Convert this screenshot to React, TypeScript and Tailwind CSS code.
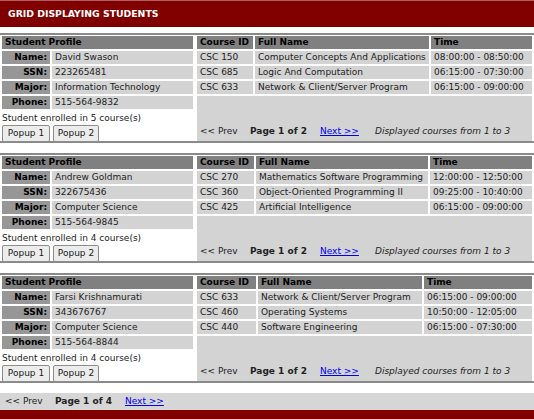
import React from 'react';

interface Course {
  id: string;
  name: string;
  time: string;
}

interface Student {
  name: string;
  ssn: string;
  major: string;
  phone: string;
  count: number;
  cols: [number, number, number];
  courses: Course[];
}

const students: Student[] = [
  {
    name: 'David Swason',
    ssn: '223265481',
    major: 'Information Technology',
    phone: '515-564-9832',
    count: 5,
    cols: [56, 174, 101],
    courses: [
      { id: 'CSC 150', name: 'Computer Concepts And Applications', time: '08:00:00 - 08:50:00' },
      { id: 'CSC 685', name: 'Logic And Computation', time: '06:15:00 - 07:30:00' },
      { id: 'CSC 633', name: 'Network & Client/Server Program', time: '06:15:00 - 09:00:00' },
    ],
  },
  {
    name: 'Andrew Goldman',
    ssn: '322675436',
    major: 'Computer Science',
    phone: '515-564-9845',
    count: 4,
    cols: [57, 172, 102],
    courses: [
      { id: 'CSC 270', name: 'Mathematics Software Programming', time: '12:00:00 - 12:50:00' },
      { id: 'CSC 360', name: 'Object-Oriented Programming II', time: '09:25:00 - 10:40:00' },
      { id: 'CSC 425', name: 'Artificial Intelligence', time: '06:15:00 - 09:00:00' },
    ],
  },
  {
    name: 'Farsi Krishnamurati',
    ssn: '343676767',
    major: 'Computer Science',
    phone: '515-564-8844',
    count: 4,
    cols: [59, 164, 108],
    courses: [
      { id: 'CSC 633', name: 'Network & Client/Server Program', time: '06:15:00 - 09:00:00' },
      { id: 'CSC 460', name: 'Operating Systems', time: '10:50:00 - 12:05:00' },
      { id: 'CSC 440', name: 'Software Engineering', time: '06:15:00 - 07:30:00' },
    ],
  },
];

function ProfileRow({ label, value }: { label: string; value: string }) {
  return (
    <div className="flex gap-[2px] h-[13px]">
      <div className="w-[48px] bg-[#979797] font-bold text-right pr-[3px] leading-[13px]">{label}</div>
      <div className="flex-1 bg-[#d3d3d3] pl-[3px] leading-[13px] text-[#222]">{value}</div>
    </div>
  );
}

function StudentBlock({ s }: { s: Student }) {
  const [w1, w2, w3] = s.cols;
  return (
    <div className="h-[110px] border-y-2 border-[#8a8a8a] flex gap-[4px] px-[2px] pt-[1px]">
      <div className="w-[191px] flex flex-col">
        <div className="flex flex-col gap-[2px]">
          <div className="h-[13px] bg-[#808080] font-bold pl-[3px] leading-[13px]">Student Profile</div>
          <ProfileRow label="Name:" value={s.name} />
          <ProfileRow label="SSN:" value={s.ssn} />
          <ProfileRow label="Major:" value={s.major} />
          <ProfileRow label="Phone:" value={s.phone} />
        </div>
        <div className="mt-[3px] leading-[13px] text-[#222]">Student enrolled in {s.count} course(s)</div>
        <div className="flex gap-[3px]">
          <button className="w-[48px] h-[17px] bg-[#ececec] border border-[#8c8c8c] rounded-[2px] text-[9px] leading-[15px] text-[#222]">Popup 1</button>
          <button className="w-[46px] h-[17px] bg-[#ececec] border border-[#8c8c8c] rounded-[2px] text-[9px] leading-[15px] text-[#222]">Popup 2</button>
        </div>
      </div>
      <div className="flex-1 flex flex-col gap-[2px]">
        <div className="flex gap-[2px] h-[13px] font-bold leading-[13px]">
          <div className="bg-[#808080] pl-[3px]" style={{ width: w1 }}>Course ID</div>
          <div className="bg-[#808080] pl-[3px]" style={{ width: w2 }}>Full Name</div>
          <div className="bg-[#808080] pl-[3px]" style={{ width: w3 }}>Time</div>
        </div>
        {s.courses.map((c) => (
          <div key={c.id} className="flex gap-[2px] h-[13px] leading-[13px] text-[#222]">
            <div className="bg-[#d3d3d3] pl-[3px]" style={{ width: w1 }}>{c.id}</div>
            <div className="bg-[#d3d3d3] pl-[3px]" style={{ width: w2 }}>{c.name}</div>
            <div className="bg-[#d3d3d3] pl-[3px]" style={{ width: w3 }}>{c.time}</div>
          </div>
        ))}
        <div className="flex-1 bg-[#d3d3d3] flex items-end pb-[3px] pl-[3px] text-[#222]">
          <span className="w-[50px]">&lt;&lt; Prev</span>
          <span className="w-[70px] font-bold">Page 1 of 2</span>
          <span className="w-[55px] text-[#0000ee] underline">Next &gt;&gt;</span>
          <span className="italic">Displayed courses from 1 to 3</span>
        </div>
      </div>
    </div>
  );
}

export default function App() {
  return (
    <div className="w-[534px] h-[419px] bg-white overflow-hidden flex flex-col text-[9px] text-black" style={{ fontFamily: '"DejaVu Sans", Verdana, sans-serif' }}>
      <div className="h-[27px] bg-[#800000] border-t border-[#b06060] flex items-center pl-[8px] shrink-0">
        <span className="text-white font-bold text-[9.3px]">GRID DISPLAYING STUDENTS</span>
      </div>
      <div className="flex flex-col gap-[10px] mt-[6px] shrink-0">
        {students.map((s) => (
          <StudentBlock key={s.name} s={s} />
        ))}
      </div>
      <div className="mt-[10px] h-[17px] shrink-0 bg-[#d6d6d6] flex items-center pl-[5px] text-[#222]">
        <span className="w-[50px]">&lt;&lt; Prev</span>
        <span className="w-[70px] font-bold">Page 1 of 4</span>
        <span className="text-[#0000ee] underline">Next &gt;&gt;</span>
      </div>
      <div className="flex-1 bg-[#800000]" />
    </div>
  );
}
